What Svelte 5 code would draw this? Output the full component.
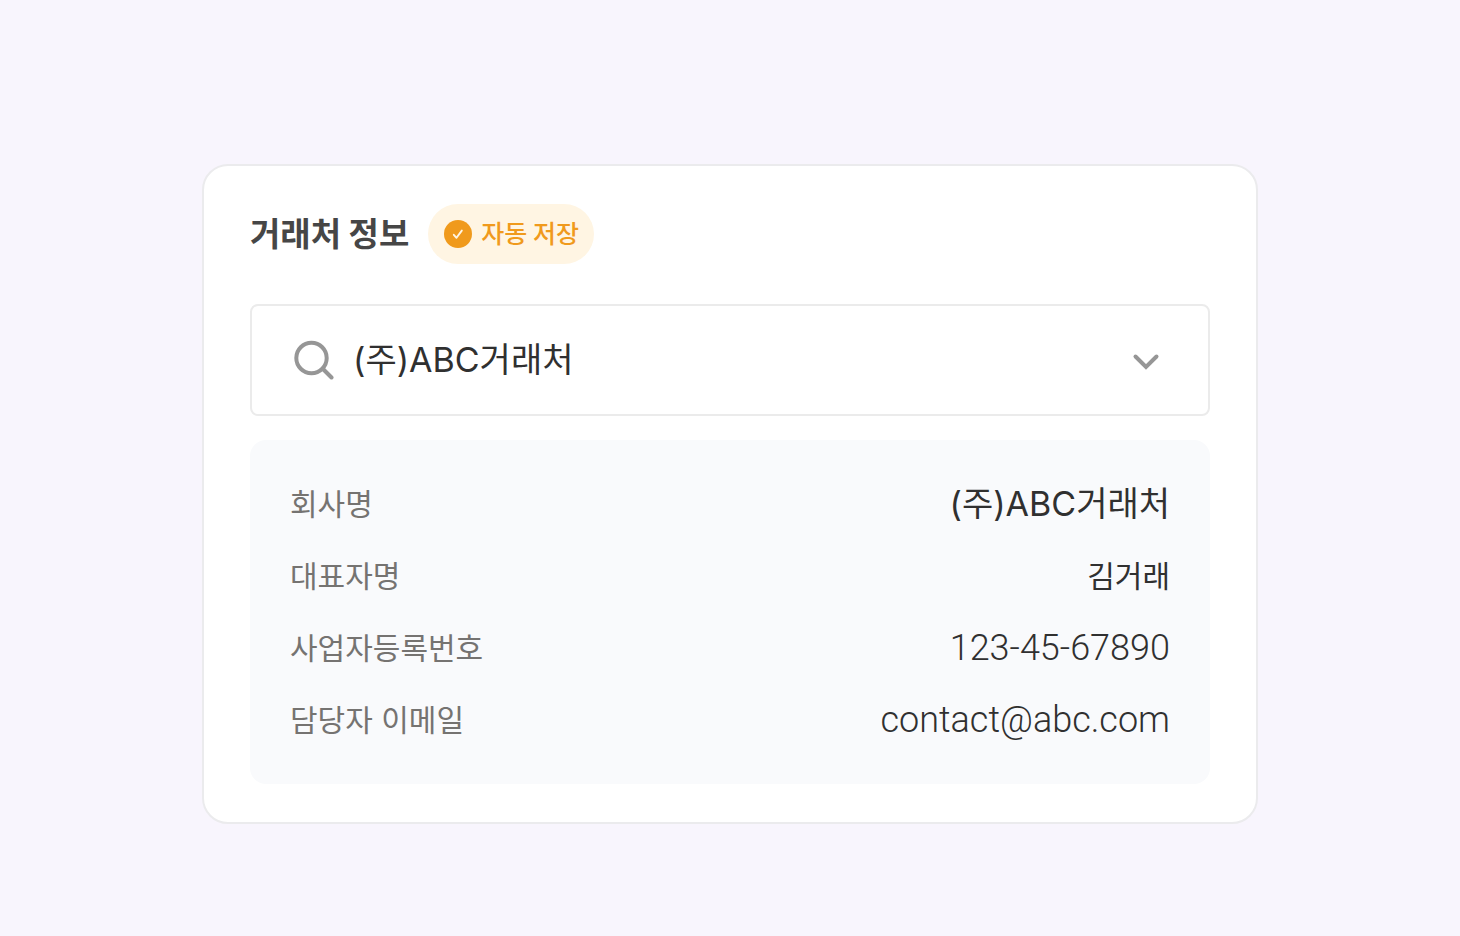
<script>
	let query = '(주)ABC거래처';

	const rows = [
		{ label: '회사명', value: '(주)ABC거래처', type: 'name' },
		{ label: '대표자명', value: '김거래', type: 'short' },
		{ label: '사업자등록번호', value: '123-45-67890', type: 'latin' },
		{ label: '담당자 이메일', value: 'contact@abc.com', type: 'latin' }
	];
</script>

<main>
	<section class="card" aria-labelledby="card-title">
		<header>
			<h1 id="card-title">거래처 정보</h1>
			<div class="badge">
				<svg width="28" height="28" viewBox="0 0 28 28" aria-hidden="true">
					<circle cx="14" cy="14" r="14" fill="#f09a1c" />
					<path
						d="M9.8 14.8l2.7 3 5.3-7.2"
						fill="none"
						stroke="#fff5e3"
						stroke-width="1.9"
						stroke-linecap="round"
						stroke-linejoin="round"
					/>
				</svg>
				<span>자동 저장</span>
			</div>
		</header>

		<div class="search">
			<svg width="40" height="40" viewBox="0 0 40 40" aria-hidden="true">
				<circle cx="17.5" cy="18" r="15.2" />
				<path d="M29 29L37.5 37.5" />
			</svg>
			<input type="text" aria-label="거래처 검색" bind:value={query} />
			<button type="button" aria-label="목록 열기">
				<svg width="28" height="18" viewBox="0 0 28 18" aria-hidden="true">
					<path d="M3.5 4.5L14 15L24.5 4.5" />
				</svg>
			</button>
		</div>

		<dl>
			{#each rows as row}
				<div class="row">
					<dt>{row.label}</dt>
					<dd class={row.type}>{row.value}</dd>
				</div>
			{/each}
		</dl>
	</section>
</main>

<style>
	:global(body) {
		margin: 0;
		background: #f8f5fd;
	}

	main {
		padding: 164px 24px 112px;
		font-family: Inter, 'Noto Sans CJK KR', sans-serif;
		color: #303030;
	}

	.card {
		box-sizing: border-box;
		max-width: 1056px;
		margin: 0 auto;
		padding: 38px 46px;
		border: 2px solid #ebebed;
		border-radius: 26px;
		background: #fff;
	}

	header {
		display: flex;
		align-items: center;
		gap: 19px;
		margin-bottom: 40px;
	}

	h1,
	.badge span {
		margin: 0;
		padding-bottom: 4px;
		font-family: 'Noto Sans CJK KR', sans-serif;
		line-height: 56px;
	}

	h1 {
		font-size: 33px;
		font-weight: 700;
		color: #464646;
	}

	.badge {
		display: flex;
		align-items: center;
		gap: 9px;
		padding: 0 15px 0 16px;
		border-radius: 30px;
		background: #fff5e3;
		font-size: 25px;
		font-weight: 500;
		color: #f09a1c;
	}

	.search {
		display: flex;
		align-items: center;
		box-sizing: border-box;
		height: 112px;
		padding: 0 40px 0 42px;
		margin-bottom: 24px;
		border: 2px solid #ebebeb;
		border-radius: 8px;
	}

	.search svg {
		flex: none;
		fill: none;
		stroke: #969696;
		stroke-width: 4;
		stroke-linecap: round;
	}

	input {
		flex: 1;
		min-width: 0;
		height: 64px;
		margin-left: 19px;
		padding: 0 0 6px;
		border: 0;
		outline: 0;
		background: none;
		font: inherit;
		font-size: 34px;
		color: inherit;
	}

	button {
		display: flex;
		align-items: center;
		justify-content: center;
		width: 44px;
		height: 44px;
		padding: 2px 0 0;
		border: 0;
		background: none;
		cursor: pointer;
	}

	dl {
		display: flex;
		flex-direction: column;
		gap: 24px;
		margin: 0;
		padding: 40px;
		border-radius: 16px;
		background: #f9fafc;
	}

	.row {
		display: flex;
		justify-content: space-between;
		line-height: 48px;
	}

	dt {
		font-size: 30px;
		color: #757371;
	}

	dd {
		margin: 0;
		font-size: 34px;
	}

	.short {
		font-size: 30px;
	}

	.latin {
		font-family: Roboto, sans-serif;
		font-size: 36px;
		font-weight: 350;
	}
</style>
